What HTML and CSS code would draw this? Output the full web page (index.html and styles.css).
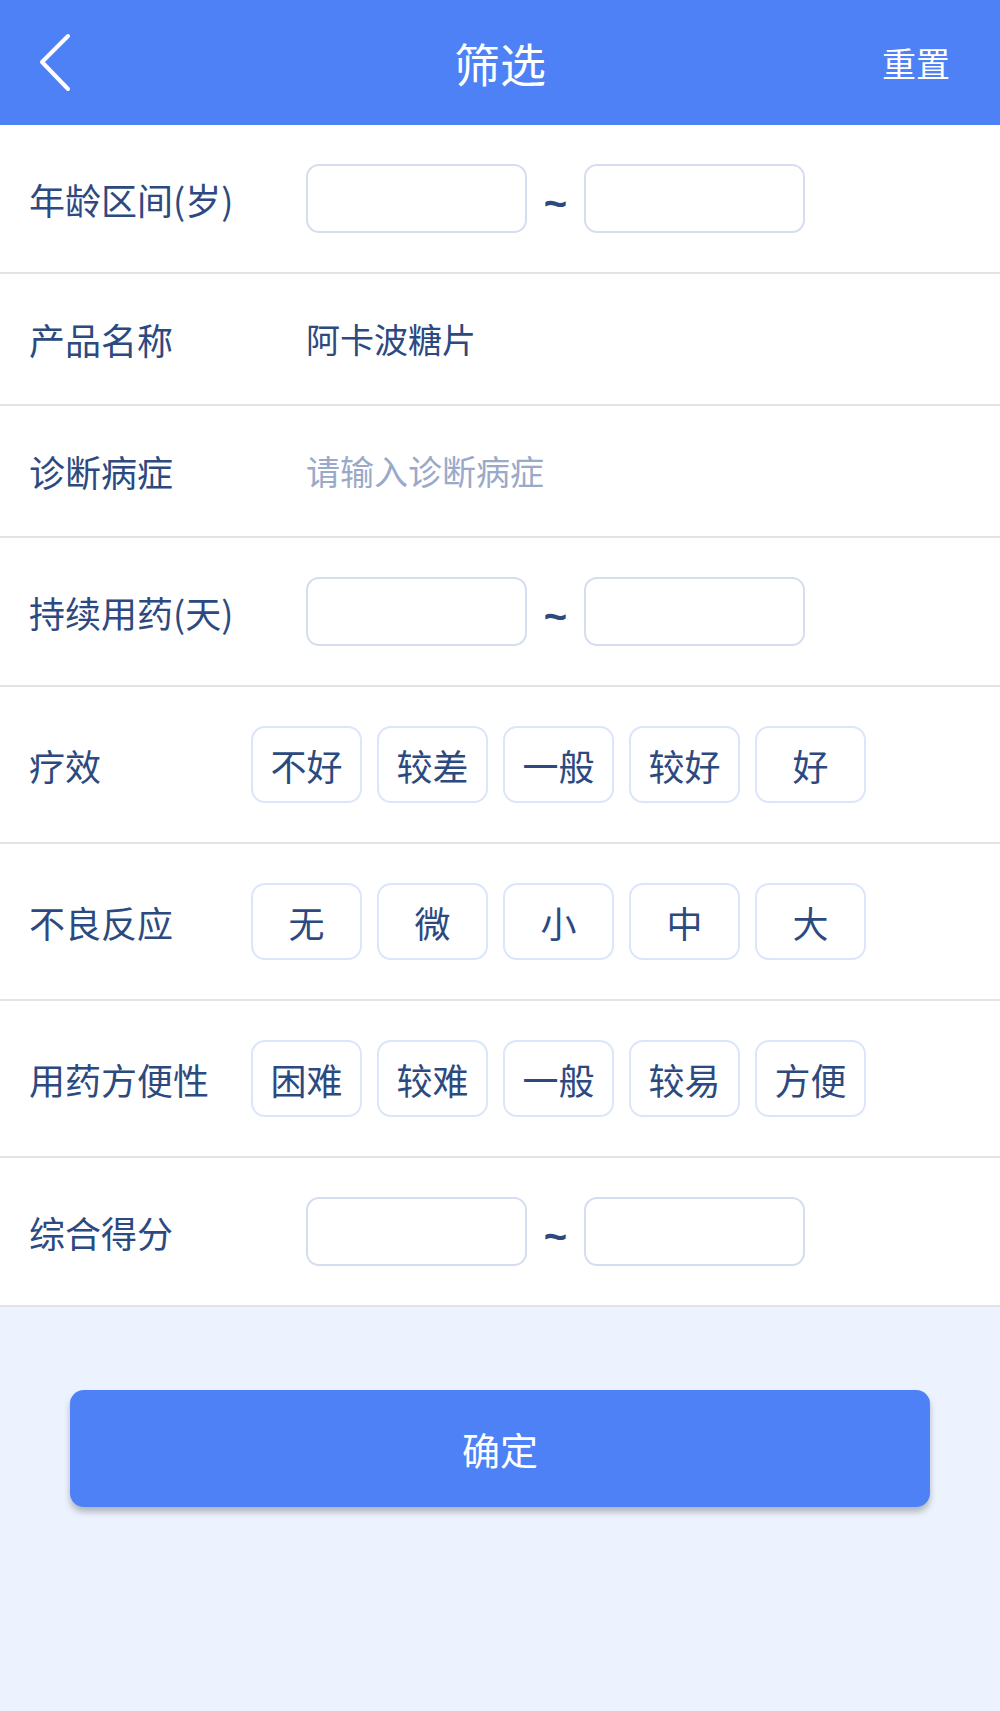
FILE: index.html
```html
<!DOCTYPE html>
<html lang="zh-CN">
<head>
<meta charset="utf-8">
<title>筛选</title>
<link rel="stylesheet" href="styles.css">
</head>
<body>
<div class="page">
  <header class="topbar">
    <span class="back">
      <svg width="40" height="60" viewBox="0 0 40 60"><polyline points="30,4 4,30 30,57" fill="none" stroke="#ffffff" stroke-width="4" stroke-linecap="round" stroke-linejoin="round"/></svg>
    </span>
    <h1 class="title">筛选</h1>
    <span class="reset">重置</span>
  </header>

  <section class="form">
    <div class="row row-range">
      <div class="label label-wide">年龄区间(岁)</div>
      <div class="range"><div class="box"></div><span class="tilde">~</span><div class="box"></div></div>
    </div>
    <div class="row row-text">
      <div class="label label-wide">产品名称</div>
      <div class="value">阿卡波糖片</div>
    </div>
    <div class="row row-text">
      <div class="label label-wide">诊断病症</div>
      <div class="value placeholder">请输入诊断病症</div>
    </div>
    <div class="row row-range">
      <div class="label label-wide">持续用药(天)</div>
      <div class="range"><div class="box"></div><span class="tilde">~</span><div class="box"></div></div>
    </div>
    <div class="row row-tags">
      <div class="label label-narrow">疗效</div>
      <div class="tags"><span class="tag">不好</span><span class="tag">较差</span><span class="tag">一般</span><span class="tag">较好</span><span class="tag">好</span></div>
    </div>
    <div class="row row-tags">
      <div class="label label-narrow">不良反应</div>
      <div class="tags"><span class="tag">无</span><span class="tag">微</span><span class="tag">小</span><span class="tag">中</span><span class="tag">大</span></div>
    </div>
    <div class="row row-tags">
      <div class="label label-narrow">用药方便性</div>
      <div class="tags"><span class="tag">困难</span><span class="tag">较难</span><span class="tag">一般</span><span class="tag">较易</span><span class="tag">方便</span></div>
    </div>
    <div class="row row-range">
      <div class="label label-wide">综合得分</div>
      <div class="range"><div class="box"></div><span class="tilde">~</span><div class="box"></div></div>
    </div>
  </section>

  <footer class="bottom">
    <button class="confirm">确定</button>
  </footer>
</div>
</body>
</html>
```

FILE: styles.css
```css
* { box-sizing: border-box; }
html, body {
  margin: 0;
  padding: 0;
  background: #ecf2fe;
}
body {
  font-family: "Noto Sans CJK SC", "Noto Sans", sans-serif;
  color: #2d4a80;
}
.page {
  width: 1000px;
  min-height: 1711px;
  display: flex;
  flex-direction: column;
}
.topbar {
  height: 125px;
  background: #4e81f6;
  display: flex;
  align-items: center;
  justify-content: space-between;
  padding: 0 50px 0 38px;
  position: relative;
}
.back {
  width: 40px;
  height: 60px;
  display: flex;
  margin-top: -1px;
}
.title {
  position: absolute;
  left: 0;
  right: 0;
  top: 0;
  height: 125px;
  line-height: 125px;
  margin: 0;
  text-align: center;
  font-size: 46px;
  font-weight: normal;
  color: #ffffff;
  pointer-events: none;
}
.reset {
  font-size: 34px;
  color: #ffffff;
  line-height: 1;
}
.form {
  background: #ffffff;
}
.row {
  display: flex;
  align-items: center;
  padding-left: 29px;
  border-bottom: 2px solid #e3e3e3;
}
.row-range { height: 149px; }
.row-text { height: 132px; }
.row-tags { height: 157px; }
.label {
  font-size: 36px;
  line-height: 1;
  flex: none;
}
.label-wide { width: 277px; }
.label-narrow { width: 222px; }
.range {
  display: flex;
  align-items: center;
}
.box {
  width: 221px;
  height: 69px;
  border: 2px solid #d6ddef;
  border-radius: 13px;
  background: #ffffff;
}
.tilde {
  width: 57px;
  text-align: center;
  font-family: "Liberation Sans", sans-serif;
  font-size: 40px;
  font-weight: bold;
  line-height: 1;
  margin-top: 8px;
}
.value {
  font-size: 34px;
  line-height: 1;
}
.placeholder {
  color: #9ba9c9;
}
.tags {
  display: flex;
  gap: 15px;
}
.tag {
  width: 111px;
  height: 77px;
  border: 2px solid #dbe6fb;
  border-radius: 14px;
  display: flex;
  align-items: center;
  justify-content: center;
  font-size: 36px;
}
.bottom {
  flex: 1;
  background: #ecf2fe;
  padding: 83px 70px 0;
}
.confirm {
  display: block;
  width: 860px;
  height: 117px;
  border: none;
  border-radius: 14px;
  background: #4e81f6;
  color: #ffffff;
  font-family: "Noto Sans CJK SC", "Noto Sans", sans-serif;
  font-size: 38px;
  box-shadow: 0 5px 6px rgba(0, 0, 0, 0.25);
}
```
